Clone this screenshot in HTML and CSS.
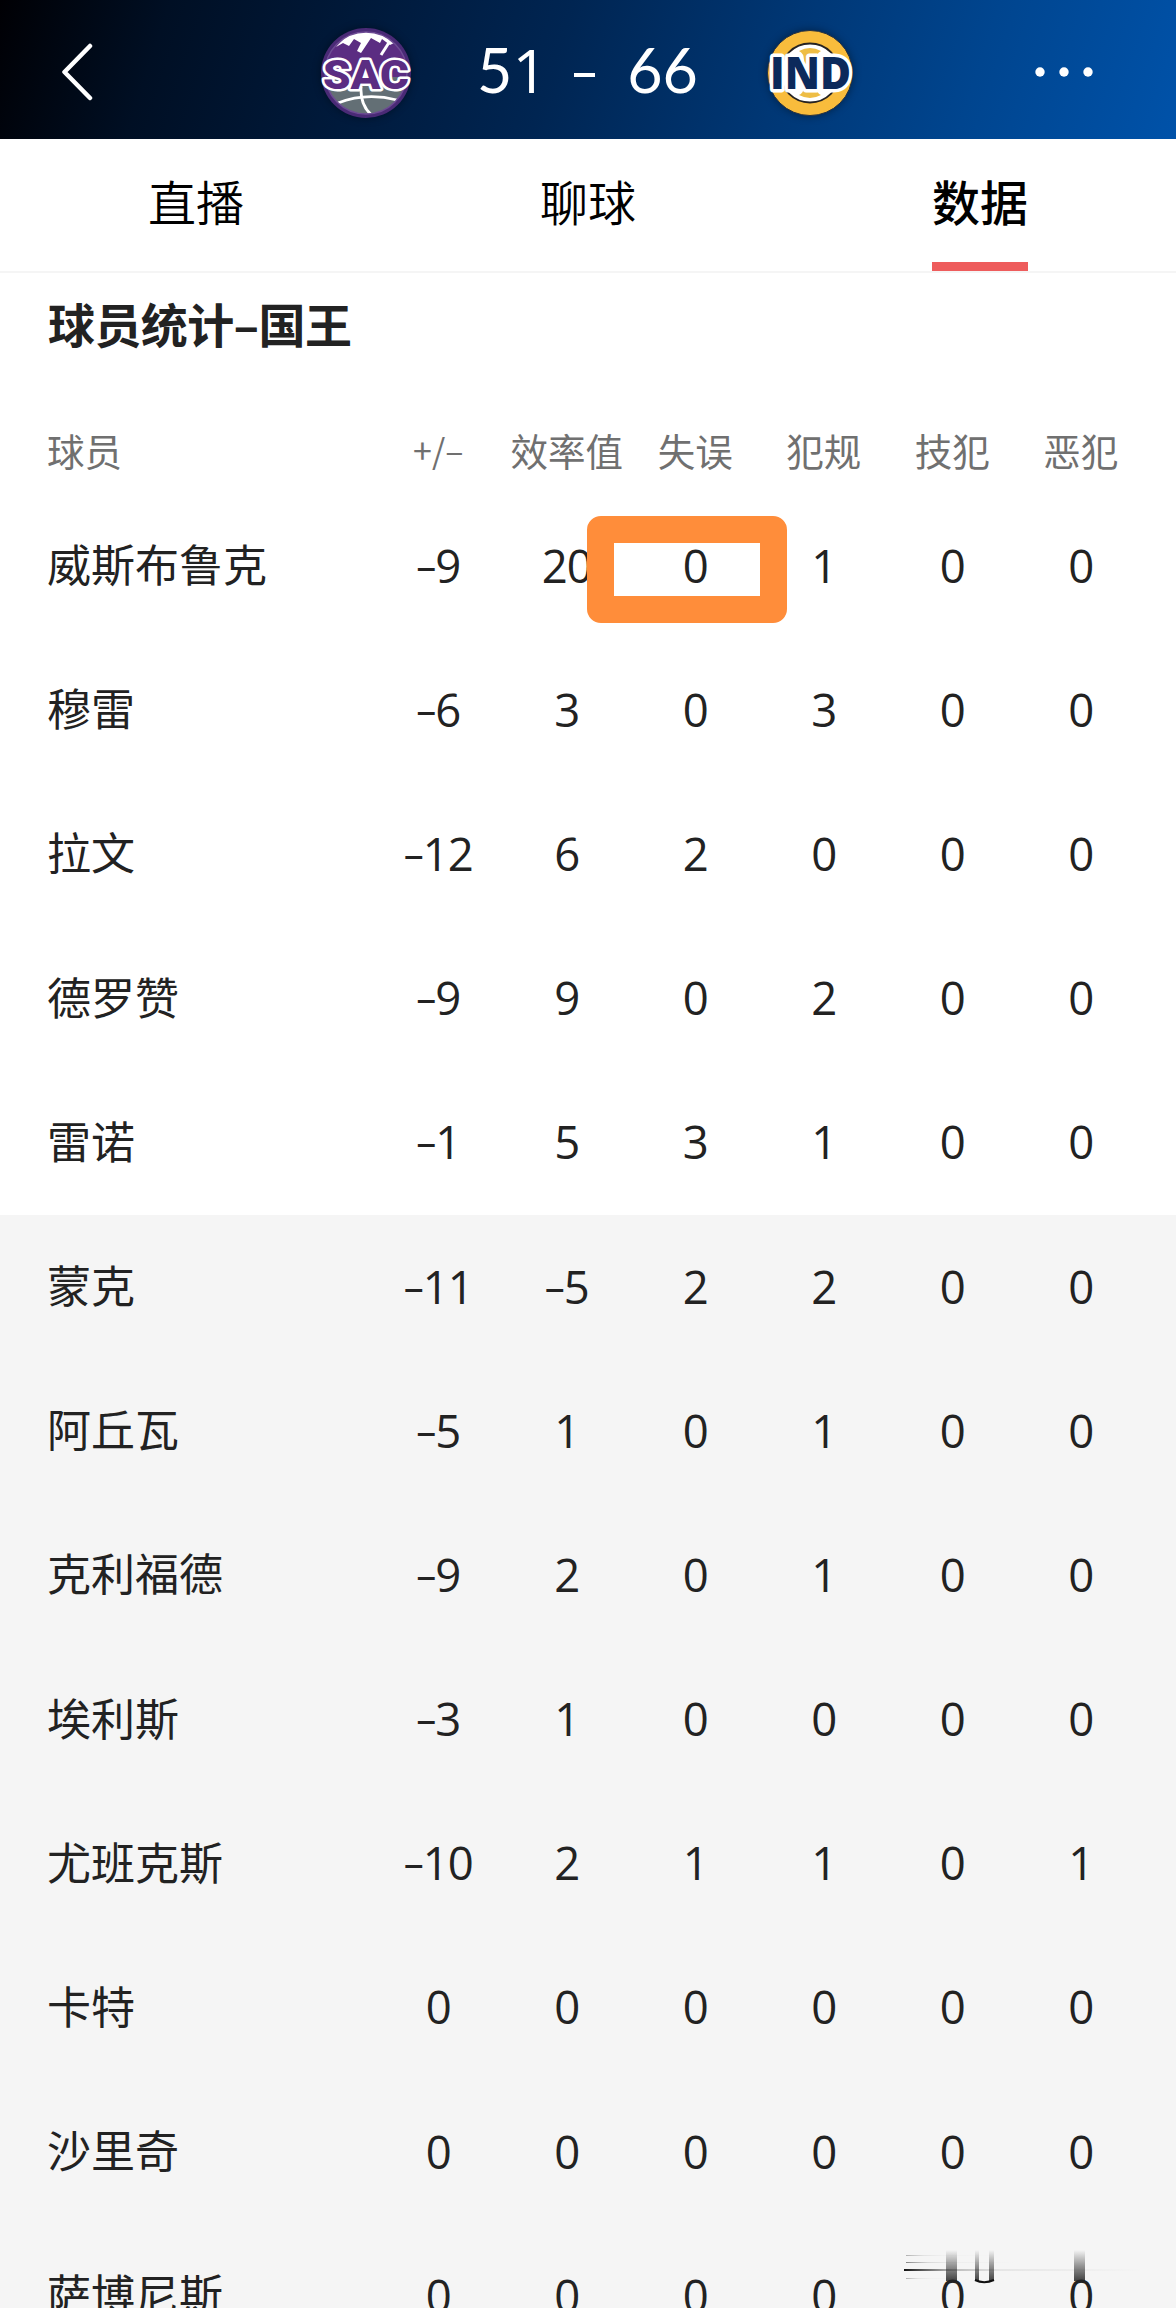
FILE: index.html
```html
<!DOCTYPE html>
<html lang="zh-CN">
<head>
    <meta charset="UTF-8">
    <meta name="viewport" content="width=device-width, initial-scale=1.0">
    <title>球员统计</title>
    <link rel="stylesheet" href="styles.css">
</head>
<body>
    <header class="topbar">
        <svg class="back" viewBox="0 0 32 58" width="32" height="58">
            <path d="M29 3 L3.500 29 L29 55" fill="none" stroke="#fff" stroke-width="4.500" stroke-linecap="round" stroke-linejoin="round"/>
        </svg>
        <div class="match">
            <svg class="logo" viewBox="0 0 100 100" width="100" height="100">
                <defs>
                    <clipPath id="sac-ball"><circle cx="50" cy="50" r="41"/></clipPath>
                </defs>
                <circle cx="50" cy="50" r="45" fill="#4a2a76"/>
                <g clip-path="url(#sac-ball)">
                    <rect x="5" y="5" width="90" height="50" fill="#5b2d82"/>
                    <rect x="5" y="54" width="90" height="42" fill="#636f75"/>
                    <path d="M20 24 L34 9 L66 9 L78 20 L74 22 L66 16 L64 20 L55 15 L45 30 L41 28 L45 20 L38 16 L33 23 L27 20 Z" fill="#fff"/>
                    <path d="M74 18 L65 32" stroke="#fff" stroke-width="3"/>
                    <path d="M22 80 Q50 69 81 77" fill="none" stroke="#fff" stroke-width="2.800"/>
                    <path d="M45 64 Q44 84 58 94" fill="none" stroke="#fff" stroke-width="2.800"/>
                </g>
                <circle cx="50" cy="50" r="41" fill="none" stroke="#6d4b94" stroke-width="1.500"/>
                <text class="logo-sac" x="7" y="66" textLength="86" lengthAdjust="spacingAndGlyphs">SAC</text>
            </svg>
            <div class="score"><span>5<b>1</b></span><i></i><span>66</span></div>
            <svg class="logo" viewBox="0 0 100 100" width="100" height="100">
                <circle cx="50" cy="50" r="42.500" fill="#f8bc3c" stroke="#27313f" stroke-width="1"/>
                <circle cx="50" cy="50" r="29.500" fill="#fff" stroke="#262322" stroke-width="1.800"/>
                <path d="M39 28 Q50 22 61 28 Q56 30 56 38 L56 62 Q56 70 61 72 Q50 78 39 72 Q44 70 44 62 L44 38 Q44 30 39 28 Z" fill="#eebd45"/>
                <text class="logo-ind" x="10" y="66" textLength="81" lengthAdjust="spacingAndGlyphs">IND</text>
            </svg>
        </div>
        <svg class="more" viewBox="0 0 60 12" width="60" height="12">
            <circle cx="6" cy="6" r="4.700" fill="#fff"/>
            <circle cx="30" cy="6" r="4.700" fill="#fff"/>
            <circle cx="54" cy="6" r="4.700" fill="#fff"/>
        </svg>
    </header>

    <nav class="tabs">
        <a class="tab"><span>直播</span></a>
        <a class="tab"><span>聊球</span></a>
        <a class="tab active"><span>数据</span></a>
    </nav>

    <main class="stats">
        <h2>球员统计–国王</h2>
        <div class="row head"><b>球员</b><span class="plus-minus">+/–</span><span>效率值</span><span>失误</span><span>犯规</span><span>技犯</span><span>恶犯</span></div>
        <div class="row"><b>威斯布鲁克</b><span><i>–</i>9</span><span>20</span><span class="marked">0</span><span>1</span><span>0</span><span>0</span></div>
        <div class="row"><b>穆雷</b><span><i>–</i>6</span><span>3</span><span>0</span><span>3</span><span>0</span><span>0</span></div>
        <div class="row"><b>拉文</b><span><i>–</i>12</span><span>6</span><span>2</span><span>0</span><span>0</span><span>0</span></div>
        <div class="row"><b>德罗赞</b><span><i>–</i>9</span><span>9</span><span>0</span><span>2</span><span>0</span><span>0</span></div>
        <div class="row"><b>雷诺</b><span><i>–</i>1</span><span>5</span><span>3</span><span>1</span><span>0</span><span>0</span></div>
        <div class="bench">
            <div class="row"><b>蒙克</b><span><i>–</i>11</span><span><i>–</i>5</span><span>2</span><span>2</span><span>0</span><span>0</span></div>
            <div class="row"><b>阿丘瓦</b><span><i>–</i>5</span><span>1</span><span>0</span><span>1</span><span>0</span><span>0</span></div>
            <div class="row"><b>克利福德</b><span><i>–</i>9</span><span>2</span><span>0</span><span>1</span><span>0</span><span>0</span></div>
            <div class="row"><b>埃利斯</b><span><i>–</i>3</span><span>1</span><span>0</span><span>0</span><span>0</span><span>0</span></div>
            <div class="row"><b>尤班克斯</b><span><i>–</i>10</span><span>2</span><span>1</span><span>1</span><span>0</span><span>1</span></div>
            <div class="row"><b>卡特</b><span>0</span><span>0</span><span>0</span><span>0</span><span>0</span><span>0</span></div>
            <div class="row"><b>沙里奇</b><span>0</span><span>0</span><span>0</span><span>0</span><span>0</span><span>0</span></div>
            <div class="row"><b>萨博尼斯</b><span>0</span><span>0</span><span>0</span><span>0</span><span>0</span><span>0</span></div>
        </div>
    </main>

    <svg class="smear" viewBox="0 0 250 34" width="250" height="34">
        <defs>
            <linearGradient id="down" x1="0" y1="0" x2="0" y2="1">
                <stop offset="0" stop-color="#222" stop-opacity="0"/>
                <stop offset="0.500" stop-color="#222" stop-opacity="0.450"/>
                <stop offset="1" stop-color="#222" stop-opacity="0.850"/>
            </linearGradient>
            <linearGradient id="across">
                <stop offset="0" stop-color="#111"/>
                <stop offset="0.200" stop-color="#333" stop-opacity="0.300"/>
                <stop offset="0.400" stop-color="#333" stop-opacity="0.080"/>
                <stop offset="1" stop-color="#333" stop-opacity="0"/>
            </linearGradient>
        </defs>
        <rect x="2" y="5" width="90" height="1" fill="url(#across)" opacity="0.300"/>
        <rect x="2" y="12" width="110" height="1" fill="url(#across)" opacity="0.500"/>
        <rect x="0" y="19" width="240" height="2" fill="url(#across)"/>
        <rect x="2" y="28" width="60" height="1" fill="url(#across)" opacity="0.300"/>
        <rect x="42" y="0" width="11" height="31" fill="url(#down)"/>
        <rect x="71" y="0" width="4" height="31" fill="url(#down)"/>
        <rect x="85" y="0" width="5" height="31" fill="url(#down)"/>
        <path d="M71 30 Q80 34.500 90 30" fill="none" stroke="#111" stroke-width="2"/>
        <rect x="170" y="0" width="11" height="31" fill="url(#down)"/>
    </svg>
</body>
</html>
```
FILE: styles.css
```css
* {
    box-sizing: border-box;
}

body {
    position: relative;
    margin: 0;
    height: 2308px;
    overflow: hidden;
    background-color: #fff;
    color: #222;
    font-family: "Noto Sans CJK SC", sans-serif;
}

.topbar {
    display: flex;
    align-items: center;
    height: 139px;
    padding: 4px 82px 0 61px;
    background: linear-gradient(108deg, #000004 0%, #000f24 14%, #001c40 34%, #002552 47%, #003775 66%, #00458f 82%, #0052a9 100%);
}

.topbar svg {
    display: block;
}

.match {
    display: flex;
    align-items: center;
    margin-left: 223px;
    padding-top: 3px;
}

.more {
    margin-left: auto;
}

.logo {
    overflow: visible;
}

.logo circle:first-of-type {
    filter: drop-shadow(0 0 4px rgba(0, 0, 0, 0.4));
}

.logo-sac,
.logo-ind {
    paint-order: stroke;
    stroke: #fff;
    stroke-linejoin: round;
}

.logo-sac {
    font: 900 40px Roboto, sans-serif;
    fill: #5b2d82;
    stroke-width: 5px;
}

.logo-ind {
    font: 800 44px "Open Sans", sans-serif;
    fill: #0c2a5b;
    stroke-width: 7px;
}

.score {
    display: flex;
    align-items: center;
    justify-content: space-between;
    width: 344px;
    padding: 0 62px 0 61px;
    margin-top: -7px;
    color: #fff;
    font: 61px/80px Lato, sans-serif;
}

.score b {
    font-family: "Open Sans", sans-serif;
    font-weight: 400;
}

.score i {
    width: 21px;
    height: 4px;
    margin: 10px 5px 0 0;
    background-color: #fff;
}

.tabs {
    display: flex;
    height: 134px;
    border-bottom: 2px solid #f5f5f5;
    color: #000;
    font-size: 48px;
    font-weight: 350;
}

.tab {
    flex: 1;
    display: flex;
    justify-content: center;
}

.tab span {
    height: 132px;
    line-height: 123px;
}

.tab.active span {
    font-weight: 500;
    border-bottom: 9px solid #ee5c5c;
}

.stats h2 {
    margin: 0;
    padding-left: 48px;
    height: 106px;
    font-size: 47px;
    line-height: 100px;
    letter-spacing: -0.600px;
}

.row {
    display: flex;
    align-items: center;
    height: 144.2px;
    padding: 0 0 6px 47px;
    font-size: 44px;
}

.row b {
    width: 327px;
    font-weight: 400;
}

.row span {
    width: 128.500px;
    padding-top: 3px;
    text-align: center;
    white-space: nowrap;
    font-family: "Open Sans", "Noto Sans CJK SC", sans-serif;
    font-size: 45.500px;
    letter-spacing: -1px;
}

.row i {
    font-size: 40px;
    font-style: normal;
    line-height: 1;
    vertical-align: 3px;
}

.row.head {
    height: 115px;
    padding-top: 26px;
    padding-bottom: 0;
    color: #707070;
    font-size: 37.500px;
}

.row.head span {
    padding-top: 0;
    font-family: inherit;
    font-size: 37.500px;
    letter-spacing: 0;
}

.row.head .plus-minus {
    font-size: 34px;
}

.row .marked {
    position: relative;
}

/* hand-drawn highlight over the turnover count */
.marked::before {
    content: "";
    position: absolute;
    box-sizing: border-box;
    left: -44px;
    top: -15px;
    width: 200px;
    height: 107px;
    border: 27px solid #ff8d3a;
    border-radius: 14px;
}

.bench {
    background-color: #f5f5f5;
}

.smear {
    position: absolute;
    left: 904px;
    top: 2250px;
}
```
